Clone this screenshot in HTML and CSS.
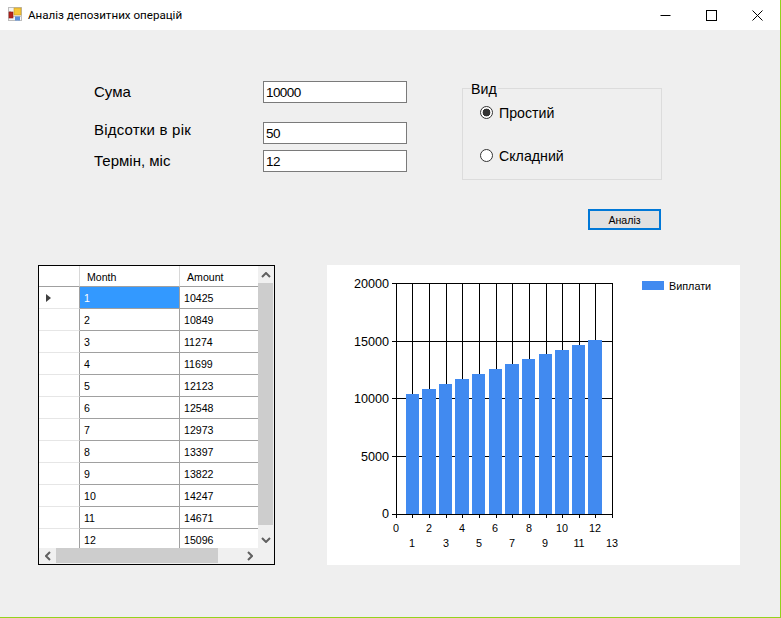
FILE: index.html
```html
<!DOCTYPE html>
<html lang="uk">
<head>
  <meta charset="UTF-8" />
  <title>Аналіз депозитних операцій</title>
  <link rel="stylesheet" href="styles.css">
</head>
<body>
  <div class="window">
    <div class="titlebar">
      <svg class="app-icon" width="16" height="16" viewBox="0 0 16 16">
        <rect x="0.5" y="0.5" width="13" height="13" fill="#f4f4f4" stroke="#bdbdbd" />
        <path d="M0 9.5h14M0 4.5h3M9.5 9v5" stroke="#c4c4c4" fill="none" />
        <rect x="1" y="5" width="4" height="6" fill="#b4231d" stroke="#8e1a16" stroke-width="0.6" />
        <rect x="6" y="1" width="7" height="7" fill="#f6c63a" stroke="#c99a1c" stroke-width="0.6" />
        <rect x="7" y="9.5" width="5" height="4" fill="#5b8fdc" />
      </svg>
      <span class="title">Аналіз депозитних операцій</span>
      <div class="controls">
        <button class="control"><svg width="11" height="11" viewBox="0 0 11 11"><path d="M0.5 5.5h10" stroke="#000" /></svg></button>
        <button class="control"><svg width="11" height="11" viewBox="0 0 11 11"><rect x="0.5" y="0.5" width="10" height="10" fill="none" stroke="#000" /></svg></button>
        <button class="control"><svg width="11" height="11" viewBox="0 0 11 11"><path d="M0.5 0.5l10 10M10.5 0.5l-10 10" stroke="#000" /></svg></button>
      </div>
    </div>

    <div class="top">
      <div class="fields">
        <div class="field field-sum">
          <label for="sum">Сума</label>
          <input type="text" id="sum" value="10000" />
        </div>
        <div class="field field-rate">
          <label for="rate">Відсотки в рік</label>
          <input type="text" id="rate" value="50" />
        </div>
        <div class="field field-term">
          <label for="term">Термін, міс</label>
          <input type="text" id="term" value="12" />
        </div>
      </div>

      <div class="side">
        <div class="group">
          <span class="group-title">Вид</span>
          <label class="radio"><input type="radio" name="kind" checked /><span>Простий</span></label>
          <label class="radio"><input type="radio" name="kind" /><span>Складний</span></label>
        </div>
        <button class="analyze">Аналіз</button>
      </div>
    </div>

    <div class="bottom">
      <div class="datagrid">
        <div class="cells">
          <table>
            <thead>
              <tr><th class="rowhead"></th><th>Month</th><th>Amount</th></tr>
            </thead>
            <tbody>
              <tr><td class="rowhead"><span class="current"></span></td><td class="selected">1</td><td>10425</td></tr>
              <tr><td class="rowhead"></td><td>2</td><td>10849</td></tr>
              <tr><td class="rowhead"></td><td>3</td><td>11274</td></tr>
              <tr><td class="rowhead"></td><td>4</td><td>11699</td></tr>
              <tr><td class="rowhead"></td><td>5</td><td>12123</td></tr>
              <tr><td class="rowhead"></td><td>6</td><td>12548</td></tr>
              <tr><td class="rowhead"></td><td>7</td><td>12973</td></tr>
              <tr><td class="rowhead"></td><td>8</td><td>13397</td></tr>
              <tr><td class="rowhead"></td><td>9</td><td>13822</td></tr>
              <tr><td class="rowhead"></td><td>10</td><td>14247</td></tr>
              <tr><td class="rowhead"></td><td>11</td><td>14671</td></tr>
              <tr><td class="rowhead"></td><td>12</td><td>15096</td></tr>
            </tbody>
          </table>
        </div>
        <div class="vscroll">
          <span class="arrow"><svg width="10" height="6" viewBox="0 0 10 6"><path d="M1 5l4-4 4 4" /></svg></span>
          <span class="vthumb"></span>
          <span class="spacer"></span>
          <span class="arrow"><svg width="10" height="6" viewBox="0 0 10 6"><path d="M1 1l4 4 4-4" /></svg></span>
        </div>
        <div class="hscroll">
          <span class="arrow"><svg width="6" height="10" viewBox="0 0 6 10"><path d="M5 1L1 5l4 4" /></svg></span>
          <span class="hthumb"></span>
          <span class="spacer"></span>
          <span class="arrow"><svg width="6" height="10" viewBox="0 0 6 10"><path d="M1 1l4 4-4 4" /></svg></span>
        </div>
        <div class="corner"></div>
      </div>

      <svg class="chart" width="413" height="300" viewBox="327 265 413 300">
        <!-- grid -->
        <path class="lines" d="M392 283.5h220.5M392 341.5h220.5M392 398.5h220.5M392 456.5h220.5M392 514.5h220.5" />
        <path class="lines" d="M396.5 283v235M412.5 283v235M429.5 283v235M446.5 283v235M462.5 283v235M479.5 283v235M496.5 283v235M512.5 283v235M529.5 283v235M546.5 283v235M562.5 283v235M579.5 283v235M595.5 283v235M612.5 283v235" />
        <!-- bars -->
        <g class="bars">
          <rect x="406" y="394" width="13" height="120" />
          <rect x="422" y="389" width="14" height="125" />
          <rect x="439" y="384" width="13" height="130" />
          <rect x="455" y="379" width="14" height="135" />
          <rect x="472" y="374" width="13" height="140" />
          <rect x="489" y="369" width="13" height="145" />
          <rect x="505" y="364" width="14" height="150" />
          <rect x="522" y="359" width="13" height="155" />
          <rect x="539" y="354" width="13" height="160" />
          <rect x="555" y="350" width="14" height="164" />
          <rect x="572" y="345" width="13" height="169" />
          <rect x="588" y="340" width="14" height="174" />
        </g>
        <path class="lines" d="M392 514.5h220.5" />
        <!-- axis labels -->
        <g class="ylabels">
          <text x="389" y="288">20000</text>
          <text x="389" y="346">15000</text>
          <text x="389" y="403">10000</text>
          <text x="389" y="461">5000</text>
          <text x="389" y="518">0</text>
        </g>
        <g class="xlabels">
          <text x="396" y="532">0</text>
          <text x="412" y="547">1</text>
          <text x="429" y="532">2</text>
          <text x="446" y="547">3</text>
          <text x="462" y="532">4</text>
          <text x="479" y="547">5</text>
          <text x="495" y="532">6</text>
          <text x="512" y="547">7</text>
          <text x="529" y="532">8</text>
          <text x="545" y="547">9</text>
          <text x="562" y="532">10</text>
          <text x="579" y="547">11</text>
          <text x="595" y="532">12</text>
          <text x="612" y="547">13</text>
        </g>
        <!-- legend -->
        <rect class="swatch" x="642" y="281" width="22" height="9" />
        <text class="legend" x="669" y="290">Виплати</text>
      </svg>
    </div>
  </div>
</body>
</html>
```

FILE: styles.css
```css
* { box-sizing: border-box; }
body {
  margin: 0;
  font-family: 'Liberation Sans', Arial, sans-serif;
  color: #000;
}
.window {
  width: 781px;
  height: 618px;
  background: #efefef;
  border-right: 1px solid #94d31b;
  border-bottom: 1px solid #94d31b;
}

/* title bar */
.titlebar {
  display: flex;
  align-items: center;
  height: 30px;
  padding-left: 8px;
  background: white;
}
.app-icon { flex: none; }
.title {
  margin-left: 4px;
  font-family: Roboto, sans-serif;
  font-size: 11.6px;
}
.controls {
  display: flex;
  margin-left: auto;
}
.control {
  display: flex;
  align-items: center;
  justify-content: center;
  width: 46px;
  height: 30px;
  padding: 0;
  border: none;
  background: none;
}

/* top form */
.top {
  display: flex;
  gap: 55px;
  padding: 51px 0 0 94px;
}
.fields { width: 313px; }
.field {
  display: flex;
  justify-content: space-between;
  align-items: flex-start;
}
.field label {
  font-size: 15px;
  line-height: 17px;
}
.field input {
  width: 144px;
  height: 22px;
  padding: 0 2px;
  border: 1px solid #7a7a7a;
  background: white;
  font-family: inherit;
  font-size: 13.5px;
  letter-spacing: -0.6px;
  outline: none;
}
.field-rate { margin-top: 19px; }
.field-term { margin-top: 6px; }
.field-sum label { padding-top: 2px; }
.field-rate label { margin-top: -1px; letter-spacing: 0.2px; }
.field-term label { padding-top: 2px; }

.side {
  display: flex;
  flex-direction: column;
  width: 200px;
  padding-top: 7px;
}
.group {
  position: relative;
  display: flex;
  flex-direction: column;
  gap: 26px;
  height: 92px;
  padding: 15px 0 0 17px;
  border: 1px solid #dcdcdc;
}
.group-title {
  position: absolute;
  top: -8px;
  left: 8px;
  padding-right: 1px;
  background: #efefef;
  font-size: 14.2px;
  line-height: 17px;
}
.radio {
  display: flex;
  align-items: center;
  gap: 6px;
  height: 17px;
  font-size: 14.2px;
}
.radio input {
  appearance: none;
  flex: none;
  width: 13px;
  height: 13px;
  margin: 0;
  border: 1px solid #333;
  border-radius: 50%;
  background: white;
}
.radio input:checked {
  background: radial-gradient(circle, #333 0, #333 3.6px, white 4.2px);
}
.analyze {
  align-self: flex-end;
  width: 73px;
  height: 21px;
  margin: 29px 1px 0 0;
  padding: 0;
  border: 2px solid #0078d7;
  background: #e1e1e1;
  font-family: inherit;
  font-size: 10.6px;
}

/* data grid + chart */
.bottom {
  display: flex;
  gap: 52px;
  margin-top: 35px;
  padding-left: 38px;
}
.datagrid {
  display: grid;
  grid-template-columns: 219px 16px;
  grid-template-rows: 282px 16px;
  width: 237px;
  height: 300px;
  border: 1px solid black;
  background: #f0f0f0;
}
.cells {
  overflow: hidden;
  background: white;
}
table {
  width: 219px;
  table-layout: fixed;
  border-collapse: separate;
  border-spacing: 0;
  font-size: 10.6px;
}
th, td {
  padding: 0 0 0 4px;
  border-right: 1px solid #a0a0a0;
  border-bottom: 1px solid #a0a0a0;
  text-align: left;
  font-weight: normal;
  white-space: nowrap;
}
th {
  height: 21px;
  padding: 2px 0 0 7px;
  border-right-color: #d8d8d8;
}
td { height: 22px; }
th:nth-child(1), td:nth-child(1) { width: 41px; }
th:nth-child(2), td:nth-child(2) { width: 100px; }
th:nth-child(3), td:nth-child(3) { width: 78px; border-right: none; }
td.rowhead {
  padding-left: 7px;
  border-right-color: #a0a0a0;
  border-bottom-color: #e6e6e6;
}
.selected {
  background: #3399ff;
  color: white;
}
.current {
  display: block;
  width: 0;
  height: 0;
  border-left: 5px solid #404040;
  border-top: 4px solid transparent;
  border-bottom: 4px solid transparent;
}
.vscroll, .hscroll { display: flex; }
.vscroll { flex-direction: column; }
.arrow {
  display: flex;
  flex: none;
  align-items: center;
  justify-content: center;
  width: 17px;
  height: 17px;
}
.hscroll .arrow { height: 16px; }
.vscroll .arrow { width: 16px; }
.arrow path {
  fill: none;
  stroke: #606060;
  stroke-width: 2;
}
.vthumb {
  flex: none;
  height: 242px;
  margin-right: 1px;
  background: #cdcdcd;
}
.hthumb {
  flex: none;
  width: 162px;
  margin-bottom: 1px;
  background: #cdcdcd;
}
.spacer { flex: 1; }

.chart {
  display: block;
  background: white;
}
.lines {
  fill: none;
  stroke: black;
  stroke-width: 1;
}
.bars rect, .swatch { fill: #418af0; }
.ylabels text {
  font-size: 12.6px;
  text-anchor: end;
}
.xlabels text {
  font-size: 10.8px;
  text-anchor: middle;
}
.legend { font-size: 10.8px; }
```
